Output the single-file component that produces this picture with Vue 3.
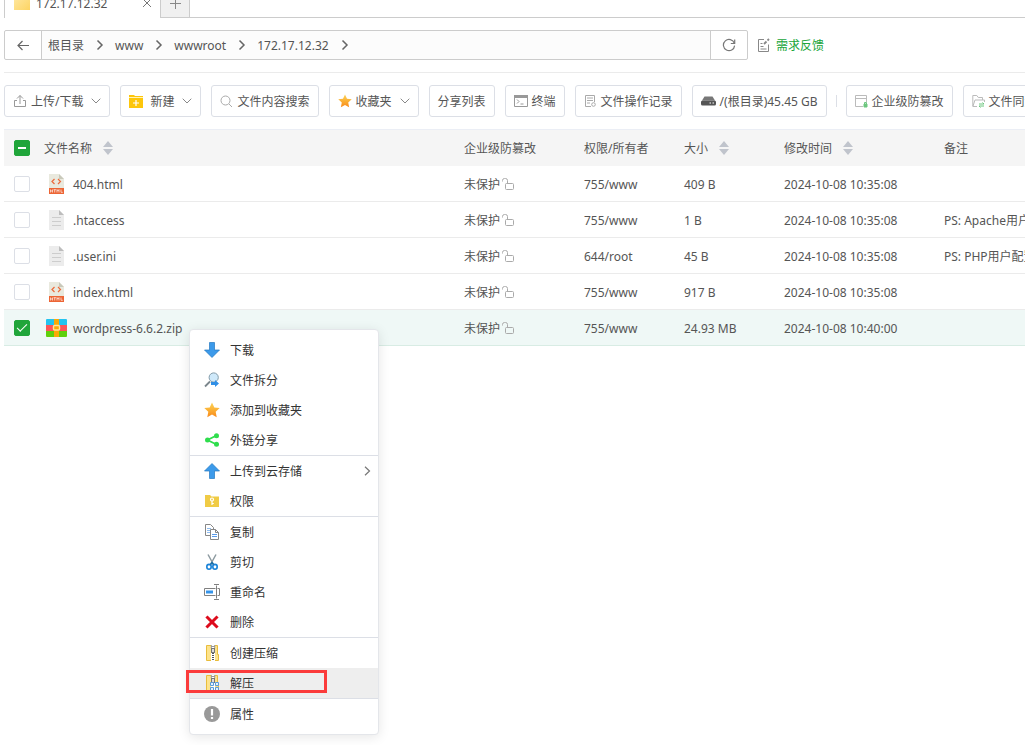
<script setup>
import { ref } from 'vue'

const crumbs = ['根目录', 'www', 'wwwroot', '172.17.12.32']

const tools = [
  { label: '上传/下载', icon: 'upload', arrow: true },
  { label: '新建', icon: 'create', arrow: true },
  { label: '文件内容搜索', icon: 'search' },
  { label: '收藏夹', icon: 'star', arrow: true },
  { label: '分享列表' },
  { label: '终端', icon: 'terminal' },
  { label: '文件操作记录', icon: 'log' },
  { label: '/(根目录)45.45 GB', icon: 'disk' },
  { divider: true },
  { label: '企业级防篡改', icon: 'guard' },
  { label: '文件同步', icon: 'sync' }
]

const files = ref([
  { name: '404.html', type: 'html', owner: '755/www', size: '409 B', time: '2024-10-08 10:35:08', note: '', checked: false },
  { name: '.htaccess', type: 'text', owner: '755/www', size: '1 B', time: '2024-10-08 10:35:08', note: 'PS: Apache用户配置文件', checked: false },
  { name: '.user.ini', type: 'text', owner: '644/root', size: '45 B', time: '2024-10-08 10:35:08', note: 'PS: PHP用户配置文件', checked: false },
  { name: 'index.html', type: 'html', owner: '755/www', size: '917 B', time: '2024-10-08 10:35:08', note: '', checked: false },
  { name: 'wordpress-6.6.2.zip', type: 'zip', owner: '755/www', size: '24.93 MB', time: '2024-10-08 10:40:00', note: '', checked: true }
])

const menu = [
  [
    { label: '下载', icon: 'down' },
    { label: '文件拆分', icon: 'split' },
    { label: '添加到收藏夹', icon: 'fav' },
    { label: '外链分享', icon: 'share' }
  ],
  [
    { label: '上传到云存储', icon: 'up', sub: true },
    { label: '权限', icon: 'perm' }
  ],
  [
    { label: '复制', icon: 'copy' },
    { label: '剪切', icon: 'cut' },
    { label: '重命名', icon: 'rename' },
    { label: '删除', icon: 'remove' }
  ],
  [
    { label: '创建压缩', icon: 'zip' },
    { label: '解压', icon: 'unzip', active: true }
  ],
  [{ label: '属性', icon: 'info' }]
]
</script>

<template>
  <div class="page">
    <svg class="defs" width="0" height="0" aria-hidden="true">
      <defs>
        <linearGradient id="gold" x1="0" y1="0" x2="0" y2="1">
          <stop offset="0" stop-color="#fbd45c" />
          <stop offset="0.5" stop-color="#fbb034" />
          <stop offset="1" stop-color="#f98a1c" />
        </linearGradient>
        <linearGradient id="folder" x1="0" y1="0" x2="1" y2="1">
          <stop offset="0" stop-color="#ffe9a6" />
          <stop offset="1" stop-color="#fdd462" />
        </linearGradient>
      </defs>
    </svg>

    <nav class="tabs" aria-label="标签页">
      <div class="tab">
        <svg width="16" height="16" viewBox="0 0 16 16"><path d="M0 0h6l2 2h8v13H0z" fill="url(#folder)" /></svg>
        <span class="tab-title t">172.17.12.32</span>
        <button class="tab-close" aria-label="关闭">
          <svg width="10" height="10" viewBox="0 0 10 10"><path d="M1 1l8 8M9 1l-8 8" stroke="#777" fill="none" /></svg>
        </button>
      </div>
      <button class="tab-add" aria-label="新标签页">
        <svg width="11" height="11" viewBox="0 0 11 11"><path d="M5.5 0v11M0 5.5h11" stroke="#888" fill="none" /></svg>
      </button>
      <div class="tab-rest"></div>
    </nav>

    <div class="path-row">
      <div class="path-bar">
        <button class="path-btn back" aria-label="返回">
          <svg width="12" height="12" viewBox="0 0 12 12"><path d="M12 6.500H1M5.500 2L1 6.500 5.500 11" stroke="#666" stroke-width="1.2" fill="none" /></svg>
        </button>
        <div class="crumbs">
          <template v-for="c in crumbs" :key="c">
            <a href="#" class="crumb t">{{ c }}</a>
            <svg class="crumb-sep" width="8" height="12" viewBox="0 0 8 12"><path d="M1.500 1.500L6 6l-4.500 4.500" stroke="#666" stroke-width="1.500" fill="none" /></svg>
          </template>
        </div>
        <button class="path-btn reload" aria-label="刷新">
          <svg width="14" height="14" viewBox="0 0 14 14">
            <path d="M12.300 5.200A5.600 5.600 0 1 0 12.600 7.600" stroke="#777" stroke-width="1.200" fill="none" />
            <path d="M12.700 1.500v4H8.800" stroke="#777" stroke-width="1.200" fill="none" />
          </svg>
        </button>
      </div>
      <a href="#" class="feedback">
        <svg width="14" height="14" viewBox="0 0 14 14" fill="none" stroke="#888">
          <path d="M7 1.500H1.500v12h10V6.500" />
          <path d="M3.500 5.500h2M3.500 8.500h3M3.500 11h6" />
          <path d="M7 6L9.500 3.500M10.500 2.500L12 1" stroke-width="1.800" />
        </svg>
        <span class="t">需求反馈</span>
      </a>
    </div>

    <div class="toolbar">
      <template v-for="(t, i) in tools" :key="i">
        <span v-if="t.divider" class="tool-divider"></span>
        <button v-else class="tool">
          <svg v-if="t.icon === 'upload'" width="14" height="14" viewBox="0 0 14 14" fill="none" stroke="#999">
            <path d="M4 6.500H1.500v6h11v-6H10" /><path d="M7 10V1.500M4 4.500l3-3 3 3" />
          </svg>
          <svg v-else-if="t.icon === 'create'" class="wide-gap" width="14" height="14" viewBox="0 0 14 14">
            <path d="M0 1h5l1 1h8V14H0z" fill="#fdc60b" /><path d="M0 3.500h14" stroke="#fff3b8" /><path d="M7 6v6M4 9h6" stroke="#fff" stroke-width="1.200" />
          </svg>
          <svg v-else-if="t.icon === 'search'" width="13" height="13" viewBox="0 0 13 13" fill="none" stroke="#aaa">
            <circle cx="5.500" cy="5.500" r="4.500" /><path d="M9 9l3 3" />
          </svg>
          <svg v-else-if="t.icon === 'star'" width="14" height="14" viewBox="0 0 16 16">
            <path d="M8 .5l2.300 4.900 5.400.7-4 3.700 1 5.400L8 12.600l-4.700 2.600 1-5.400-4-3.700 5.400-.7z" fill="url(#gold)" />
          </svg>
          <svg v-else-if="t.icon === 'terminal'" width="14" height="14" viewBox="0 0 14 14" fill="none" stroke="#999">
            <path d="M.5 1.500h13v11H.5z" /><path d="M0 2.500h14" stroke-width="3" /><path d="M3 5.500l2 2-2 2M6.500 10h3" />
          </svg>
          <svg v-else-if="t.icon === 'log'" width="13" height="14" viewBox="0 0 13 14" fill="none" stroke="#aaa">
            <path d="M7 12.500H1.500v-11h9V8" /><path d="M3 4h6M3 6.500h6M3 9h3" /><circle cx="9.500" cy="10.500" r="1.800" />
          </svg>
          <svg v-else-if="t.icon === 'disk'" width="15" height="14" viewBox="0 0 15 14">
            <path d="M3.500 2.500h8l2.500 4H1z" fill="#777" /><rect x="0" y="6.500" width="15" height="5" rx="1.500" fill="#555" /><path d="M8.500 9h1.500M11.500 9H13" stroke="#fff" stroke-width="1.200" />
          </svg>
          <svg v-else-if="t.icon === 'guard'" width="13" height="14" viewBox="0 0 13 14" fill="none" stroke="#bbb">
            <path d="M8 12.500H.5v-11h11V8M.5 4.500h11" /><path d="M9 10h3v3H9z" fill="#6cc67e" stroke="#6cc67e" /><path d="M9.500 10V8.500h2V10" stroke="#6cc67e" />
          </svg>
          <svg v-else-if="t.icon === 'sync'" width="13" height="14" viewBox="0 0 13 14" fill="none" stroke="#bbb">
            <path d="M5 12.500H.8V1.500h4l1.500 2h4.200V6M1 12l2-6h9.500v2" /><path d="M7 10h5l-1.500-1.500M12 12H7l1.500 1.500" stroke="#6cc67e" />
          </svg>
          <span class="t">{{ t.label }}</span>
          <svg v-if="t.arrow" class="chev" width="10" height="6" viewBox="0 0 10 6"><path d="M.7.7L5 5 9.300.7" stroke="#888" fill="none" /></svg>
        </button>
      </template>
    </div>

    <table class="files">
      <colgroup>
        <col class="c-check" /><col /><col class="c-guard" /><col class="c-mid" /><col class="c-mid" /><col class="c-time" /><col class="c-note" />
      </colgroup>
      <thead>
        <tr>
          <th class="check-cell"><input type="checkbox" class="box partial" aria-label="全选" /></th>
          <th><span class="sortable"><span class="t">文件名称</span><svg width="10" height="14" viewBox="0 0 10 14" fill="#c0c4cc"><path d="M5 0l5 6H0zM5 14l5-6H0z" /></svg></span></th>
          <th><span class="t">企业级防篡改</span></th>
          <th><span class="t">权限/所有者</span></th>
          <th><span class="sortable"><span class="t">大小</span><svg width="10" height="14" viewBox="0 0 10 14" fill="#c0c4cc"><path d="M5 0l5 6H0zM5 14l5-6H0z" /></svg></span></th>
          <th><span class="sortable"><span class="t">修改时间</span><svg width="10" height="14" viewBox="0 0 10 14" fill="#c0c4cc"><path d="M5 0l5 6H0zM5 14l5-6H0z" /></svg></span></th>
          <th><span class="t">备注</span></th>
        </tr>
      </thead>
      <tbody>
        <tr v-for="f in files" :key="f.name" :class="{ selected: f.checked }">
          <td class="check-cell"><input v-model="f.checked" type="checkbox" class="box" :aria-label="f.name" /></td>
          <td>
            <span class="file">
              <svg v-if="f.type === 'html'" width="24" height="20" viewBox="0 0 24 20">
                <path d="M5 0h10l5 5v9H5z" fill="#e9e9de" /><path d="M15 0l5 5h-5z" fill="#c9c9bb" />
                <path d="M10.500 5L8 7.500l2.500 2.500M14 5l2.500 2.500L14 10" stroke="#ec6a3b" stroke-width="1.200" fill="none" />
                <path d="M5 14h15v6H5z" fill="#ec6535" />
                <path d="M6.500 15.500v3M8.500 15.500v3M6.500 17h2M9.500 15.700h2.500M10.700 15.500v3M13 18.500v-3l1 1.500 1-1.500v3M17 15.500v2.800h1.800" stroke="#fbe5dc" stroke-width=".8" fill="none" />
              </svg>
              <svg v-else-if="f.type === 'text'" width="24" height="20" viewBox="0 0 24 20">
                <path d="M5 0h10l5 5v15H5z" fill="#ececec" /><path d="M15 0l5 5h-5z" fill="#bdbdbd" />
                <path d="M8 7.500h9M8 11.500h9M8 15.500h9" stroke="#cdcdcd" />
              </svg>
              <svg v-else width="24" height="20" viewBox="0 0 24 20">
                <rect x="2" y="1" width="21" height="8" rx="1" fill="#23c4f0" /><rect x="2" y="11" width="21" height="8" rx="1" fill="#5fd00c" /><path d="M2 7h21v6H2z" fill="#fd5558" />
                <path d="M10 1h5v18h-5z" fill="#fba906" /><rect x="9.500" y="7.500" width="6" height="4.500" rx="1" fill="#fba906" stroke="#ffe39b" stroke-width="1.400" />
              </svg>
              <span class="t">{{ f.name }}</span>
            </span>
          </td>
          <td>
            <span class="guard"><span class="t">未保护</span><svg width="12" height="12" viewBox="0 0 12 12" fill="none" stroke="#aaa"><rect x="3.500" y="5.500" width="8" height="6" rx="1" /><path d="M5.500 5.500V2.500a2 2 0 0 0-2-2h-1a2 2 0 0 0-2 2v1" /></svg></span>
          </td>
          <td><span class="t">{{ f.owner }}</span></td>
          <td><span class="t">{{ f.size }}</span></td>
          <td><span class="t">{{ f.time }}</span></td>
          <td><span class="t">{{ f.note }}</span></td>
        </tr>
      </tbody>
    </table>

    <div class="menu" role="menu">
      <div v-for="(group, g) in menu" :key="g" class="menu-group" role="group">
        <button v-for="m in group" :key="m.label" class="menu-item" :class="{ active: m.active }" role="menuitem">
          <svg width="16" height="16" viewBox="0 0 16 16">
            <path v-if="m.icon === 'down'" d="M5.500.5h5v7.500h5L8 15.500.5 8h5z" fill="#3c9aea" stroke="#2479c2" stroke-width=".7" />
            <path v-else-if="m.icon === 'up'" d="M5.500 15.500h5V8h5L8 .5.5 8h5z" fill="#3c9aea" stroke="#2479c2" stroke-width=".7" />
            <g v-else-if="m.icon === 'split'">
              <path d="M1 14.500L6 9.500" stroke="#7b868c" stroke-width="1.800" />
              <circle cx="9.700" cy="5.500" r="4.600" fill="#cfe9fa" stroke="#829aa8" />
              <path d="M7 10h4V8l4 3.500-4 3.500v-2H7z" fill="#2f8fe6" />
            </g>
            <path v-else-if="m.icon === 'fav'" d="M8 .5l2.300 4.900 5.400.7-4 3.700 1 5.400L8 12.600l-4.700 2.600 1-5.400-4-3.700 5.400-.7z" fill="url(#gold)" />
            <g v-else-if="m.icon === 'share'" fill="#2fdd4d">
              <path d="M12.500 3.500L3.500 8l9 4.500" fill="none" stroke="#2fdd4d" stroke-width="1.800" />
              <circle cx="12.500" cy="3.700" r="2.500" /><circle cx="3.500" cy="8" r="2.500" /><circle cx="12.500" cy="12.300" r="2.500" />
            </g>
            <g v-else-if="m.icon === 'perm'">
              <path d="M1 2h5l1.500 1.500H15V14H1z" fill="#f0cb45" />
              <circle cx="8" cy="6.500" r="1.500" fill="none" stroke="#fff" stroke-width="1.200" /><path d="M8 8v4M8 10.500h1.800" stroke="#fff" stroke-width="1.200" />
            </g>
            <g v-else-if="m.icon === 'copy'" stroke="#878787">
              <path d="M1.500.5h5l3 3v8h-8z" fill="#fff" /><path d="M3 4.500h4M3 6.500h3M3 8.500h3" stroke="#8ebcf0" />
              <path d="M6.500 5.500h5l3 3v7h-8z" fill="#fff" /><path d="M11.500 5.500v3h3" fill="none" /><path d="M8 10.500h5M8 12.500h5" stroke="#5a9bea" />
            </g>
            <g v-else-if="m.icon === 'cut'" fill="none">
              <path d="M4 .5l5.500 10M12 .5l-5.500 10" stroke="#8d9aa0" stroke-width="1.500" />
              <ellipse cx="5" cy="12.800" rx="2.200" ry="2.400" stroke="#1a83d8" stroke-width="1.600" /><ellipse cx="11" cy="12.800" rx="2.200" ry="2.400" stroke="#1a83d8" stroke-width="1.600" />
              <path d="M6.500 10.500L8 8.500l1.500 2" stroke="#1b6ea8" stroke-width="1.500" />
            </g>
            <g v-else-if="m.icon === 'rename'" fill="none" stroke="#808080">
              <path d="M11.500 4.500H.5v7h11M13.500 4.500h2v7h-2" /><path d="M2 6.500h7v3H2z" fill="#3594ea" stroke="none" />
              <path d="M12.500 1.500v13M10 .5h5M10 15.500h5" />
            </g>
            <path v-else-if="m.icon === 'remove'" d="M3.500 3.500l9 9M12.500 3.500l-9 9" stroke="#dd0b1c" stroke-width="3" stroke-linecap="square" />
            <g v-else-if="m.icon === 'zip' || m.icon === 'unzip'">
              <path d="M2.500.5h11v9h1v6h-12z" fill="#fde38b" stroke="#e9bd3c" />
              <path d="M7 0h4v16H7z" fill="#fff" /><path d="M7.300 0v3M10.700 0v3M7 1.500h4" stroke="#999" />
              <rect x="7.500" y="3.500" width="3" height="4" fill="#ddd" stroke="#777" />
              <path v-if="m.icon === 'zip'" d="M9 8v8" stroke="#555" stroke-width="2" stroke-dasharray="1 1" />
              <g v-else fill="#e4f1fc" stroke="#5a9dd8"><path d="M6.500 7.500h3v3h-3zM11.500 7.500h3v3h-3zM6.500 12.500h3v3h-3zM11.500 12.500h3v3h-3z" /></g>
            </g>
            <g v-else-if="m.icon === 'info'">
              <circle cx="8" cy="8" r="8" fill="#999" /><path d="M8 3v6.500M8 11v2" stroke="#fff" stroke-width="2.200" />
            </g>
          </svg>
          <span class="t">{{ m.label }}</span>
          <svg v-if="m.sub" class="menu-sub" width="8" height="10" viewBox="0 0 8 10"><path d="M2 .7L6.500 5 2 9.300" stroke="#777" stroke-width="1.200" fill="none" /></svg>
          <span v-if="m.active" class="marker"></span>
        </button>
      </div>
    </div>
  </div>
</template>

<style>
html,
body {
  margin: 0;
  background: #fff;
}
</style>

<style scoped>
.page {
  position: relative;
  min-height: 100vh;
  padding-left: 4px;
  box-sizing: border-box;
  overflow: hidden;
  font-family: "Noto Sans", "Noto Sans CJK SC", sans-serif;
  font-size: 12px;
  line-height: 18px;
  color: #555;
}
.defs {
  position: absolute;
}
button {
  font: inherit;
  color: inherit;
  background: none;
  border: 0;
  padding: 0;
  margin: 0;
  cursor: pointer;
}
a {
  color: inherit;
  text-decoration: none;
}
svg {
  display: block;
  flex: none;
}
.t {
  display: inline-block;
  padding-top: 2px;
}

.tabs {
  display: flex;
  align-items: flex-end;
  height: 18px;
}
.tab {
  display: flex;
  align-items: center;
  gap: 6px;
  width: 156px;
  height: 30px;
  padding: 0 8px 0 9px;
  box-sizing: border-box;
  border-left: 1px solid #ccc;
}
.tab-title {
  flex: 1;
}
.tab-add {
  display: flex;
  align-items: center;
  justify-content: center;
  width: 30px;
  height: 30px;
  box-sizing: border-box;
  border: 1px solid #ccc;
  background: #f0f0f0;
}
.tab-rest {
  flex: 1;
  border-bottom: 1px solid #ccc;
}

.path-row {
  display: flex;
  align-items: center;
  height: 54px;
  border-bottom: 1px solid #ebebeb;
}
.path-bar {
  flex: 1;
  display: flex;
  height: 30px;
  box-sizing: border-box;
  border: 1px solid #ccc;
  border-radius: 2px;
}
.path-btn {
  display: flex;
  align-items: center;
  justify-content: center;
  width: 37px;
}
.back {
  border-right: 1px solid #ccc;
}
.reload {
  border-left: 1px solid #ccc;
}
.crumbs {
  flex: 1;
  display: flex;
  align-items: center;
  gap: 11px;
  padding-left: 6px;
  background: #fcfcfc;
}
.crumb-sep {
  margin-left: 1px;
}
.feedback {
  flex: 0 0 268px;
  display: flex;
  align-items: center;
  gap: 5px;
  padding-left: 9px;
  box-sizing: content-box;
  color: #20a53a;
}

.toolbar {
  display: flex;
  gap: 10px;
  padding: 12px 0;
}
.tool {
  flex: none;
  display: flex;
  align-items: center;
  gap: 4px;
  height: 32px;
  padding: 0 8px;
  box-sizing: border-box;
  border: 1px solid #dcdfe6;
  border-radius: 3px;
  background: #fff;
  white-space: nowrap;
}
.wide-gap {
  margin-right: 3px;
}
.chev {
  margin-left: 4px;
}
.tool-divider {
  flex: none;
  align-self: center;
  width: 1px;
  height: 12px;
  margin: 0 -1px;
  background: #dcdfe6;
}

.files {
  width: 100%;
  min-width: 1184px;
  table-layout: fixed;
  border-collapse: separate;
  border-spacing: 0;
  border-top: 1px solid #ebeef5;
}
.c-check {
  width: 30px;
}
.c-guard {
  width: 120px;
}
.c-mid {
  width: 100px;
}
.c-time {
  width: 160px;
}
.c-note {
  width: 254px;
}
th,
td {
  height: 35px;
  padding: 0 10px;
  text-align: left;
  font-weight: 400;
  white-space: nowrap;
  overflow: hidden;
}
th {
  height: 36px;
  background: #f5f5f5;
}
td {
  border-bottom: 1px solid #ebebeb;
}
.selected td {
  background: #eff8f6;
  border-bottom-color: #d8ece4;
}
th.check-cell,
td.check-cell {
  padding: 0 0 0 10px;
}
.box {
  appearance: none;
  display: block;
  width: 16px;
  height: 16px;
  margin: 0;
  box-sizing: border-box;
  border: 1px solid #dcdfe6;
  border-radius: 2px;
  background: #fff;
}
.box:checked,
.box.partial {
  display: flex;
  align-items: center;
  justify-content: center;
  border-color: #20a53a;
  background: #20a53a;
}
.box.partial::before {
  content: "";
  width: 8px;
  height: 2px;
  background: #fff;
}
.box:checked::before {
  content: "";
  width: 10px;
  height: 5px;
  margin-bottom: 3px;
  box-sizing: border-box;
  border-left: 1px solid #fff;
  border-bottom: 1px solid #fff;
  transform: rotate(-45deg);
}
.sortable {
  display: flex;
  align-items: center;
  gap: 11px;
}
.file {
  display: flex;
  align-items: center;
  gap: 5px;
}
.guard {
  display: flex;
  align-items: center;
  gap: 2px;
}

.menu {
  position: absolute;
  left: 189px;
  top: 329px;
  width: 190px;
  padding: 5px 0;
  box-sizing: border-box;
  border: 1px solid #e4e6ea;
  border-radius: 4px;
  background: #fff;
  box-shadow: 0 2px 12px rgba(0, 0, 0, 0.1);
  color: #333;
}
.menu-group + .menu-group {
  border-top: 1px solid #dcdfe6;
}
.menu-item {
  position: relative;
  display: flex;
  align-items: center;
  gap: 10px;
  width: 100%;
  height: 30px;
  padding: 0 7px 0 14px;
}
.menu-item.active {
  background: #eee;
}
.menu-sub {
  margin-left: auto;
}
.marker {
  position: absolute;
  left: -4px;
  top: 2px;
  width: 141px;
  height: 23px;
  box-sizing: border-box;
  border: 3px solid #fb3b3b;
}
</style>
